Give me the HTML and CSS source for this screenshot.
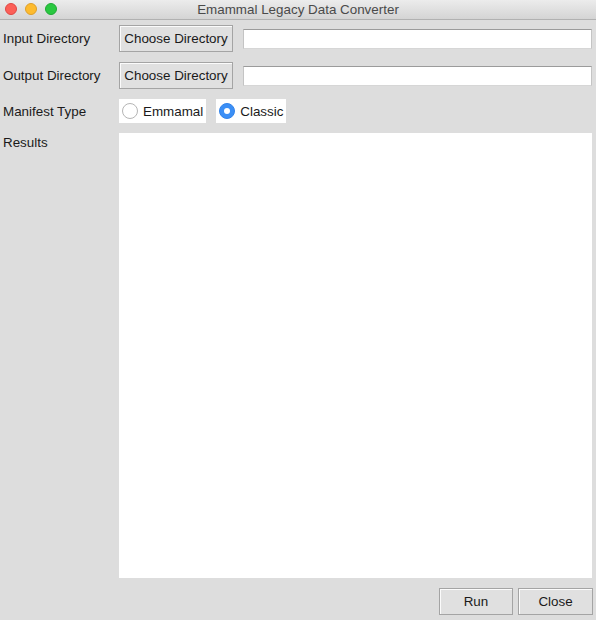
FILE: index.html
```html
<!DOCTYPE html>
<html lang="en">
<head>
<meta charset="utf-8">
<title>Emammal Legacy Data Converter</title>
<link rel="stylesheet" href="styles.css">
</head>
<body>
<div class="window">
  <header class="titlebar">
    <div class="lights">
      <span class="light red"></span>
      <span class="light yellow"></span>
      <span class="light green"></span>
    </div>
    <div class="title">Emammal Legacy Data Converter</div>
  </header>
  <main class="form">
    <div class="lbl">Input Directory</div>
    <div class="field-row">
      <button class="btn choose" type="button">Choose Directory</button>
      <input class="path" type="text">
    </div>
    <div class="lbl">Output Directory</div>
    <div class="field-row">
      <button class="btn choose" type="button">Choose Directory</button>
      <input class="path" type="text">
    </div>
    <div class="lbl">Manifest Type</div>
    <div class="radio-row">
      <label class="radio"><span class="dot"></span><span>Emmamal</span></label>
      <label class="radio"><span class="dot checked"></span><span>Classic</span></label>
    </div>
    <div class="lbl lbl-top">Results</div>
    <div class="results"></div>
  </main>
  <footer class="actions">
    <button class="btn action run" type="button">Run</button>
    <button class="btn action close" type="button">Close</button>
  </footer>
</div>
</body>
</html>
```
FILE: styles.css
```css
* { box-sizing: border-box; }
html, body {
  margin: 0;
  padding: 0;
  height: 620px;
  background: #dddddd;
  font-family: "Liberation Sans", Arial, sans-serif;
  font-size: 13.4px;
  color: #1a1a1a;
}
.window {
  display: flex;
  flex-direction: column;
  height: 620px;
}
.titlebar {
  position: relative;
  height: 20px;
  flex: none;
  background: linear-gradient(#ececec, #d4d4d4);
  border-bottom: 1px solid #b1b1b1;
  display: flex;
  align-items: center;
  justify-content: center;
}
.lights {
  position: absolute;
  left: 5px;
  top: 3px;
  display: flex;
  gap: 8px;
}
.light {
  width: 12px;
  height: 12px;
  border-radius: 50%;
  display: block;
}
.red { background: #fc5f57; border: 1px solid #df4744; }
.yellow { background: #fdbb2e; border: 1px solid #de9f29; }
.green { background: #2ac840; border: 1px solid #1fa934; }
.title {
  color: #4a4a4a;
  font-size: 13.4px;
  line-height: 19px;
}
.form {
  flex: 1;
  display: grid;
  grid-template-columns: 116px 1fr;
  grid-template-rows: 27px 27px 24px 1fr;
  row-gap: 10px;
  padding: 5px 4px 0 3px;
}
.lbl {
  display: flex;
  align-items: center;
  white-space: nowrap;
}
.lbl-top {
  align-items: flex-start;
  padding-top: 2px;
}
.field-row {
  display: flex;
  align-items: center;
  gap: 10px;
}
.btn {
  font-family: inherit;
  font-size: 13.4px;
  color: #1a1a1a;
  background: #e0e0e0;
  border: 1px solid #a4a4a4;
  box-shadow: inset 1px 1px 0 #fbfbfb;
  height: 27px;
  padding: 0;
  margin: 0;
}
.choose { width: 114px; }
.path {
  flex: 1;
  height: 20px;
  margin: 0;
  background: #fff;
  border: 1px solid #c4c4c4;
  border-top-color: #9b9b9b;
  border-bottom-color: #d6d6d6;
}
.radio-row {
  display: flex;
  gap: 10px;
  align-items: stretch;
}
.radio {
  display: flex;
  align-items: center;
  gap: 5px;
  background: #fff;
  padding: 0 3px 0 3px;
}
.dot {
  width: 16px;
  height: 16px;
  border-radius: 50%;
  border: 1px solid #b5b5b5;
  background: #fff;
  display: flex;
  align-items: center;
  justify-content: center;
}
.dot.checked {
  background: #3b8ff6;
  border-color: #3283ea;
}
.dot.checked::after {
  content: "";
  width: 6px;
  height: 6px;
  border-radius: 50%;
  background: #fff;
}
.results {
  background: #fff;
}
.actions {
  flex: none;
  display: flex;
  justify-content: flex-end;
  gap: 5px;
  padding: 10px 3px 5px 0;
}
.action { width: 75px; }
.run { width: 74px; }
```
